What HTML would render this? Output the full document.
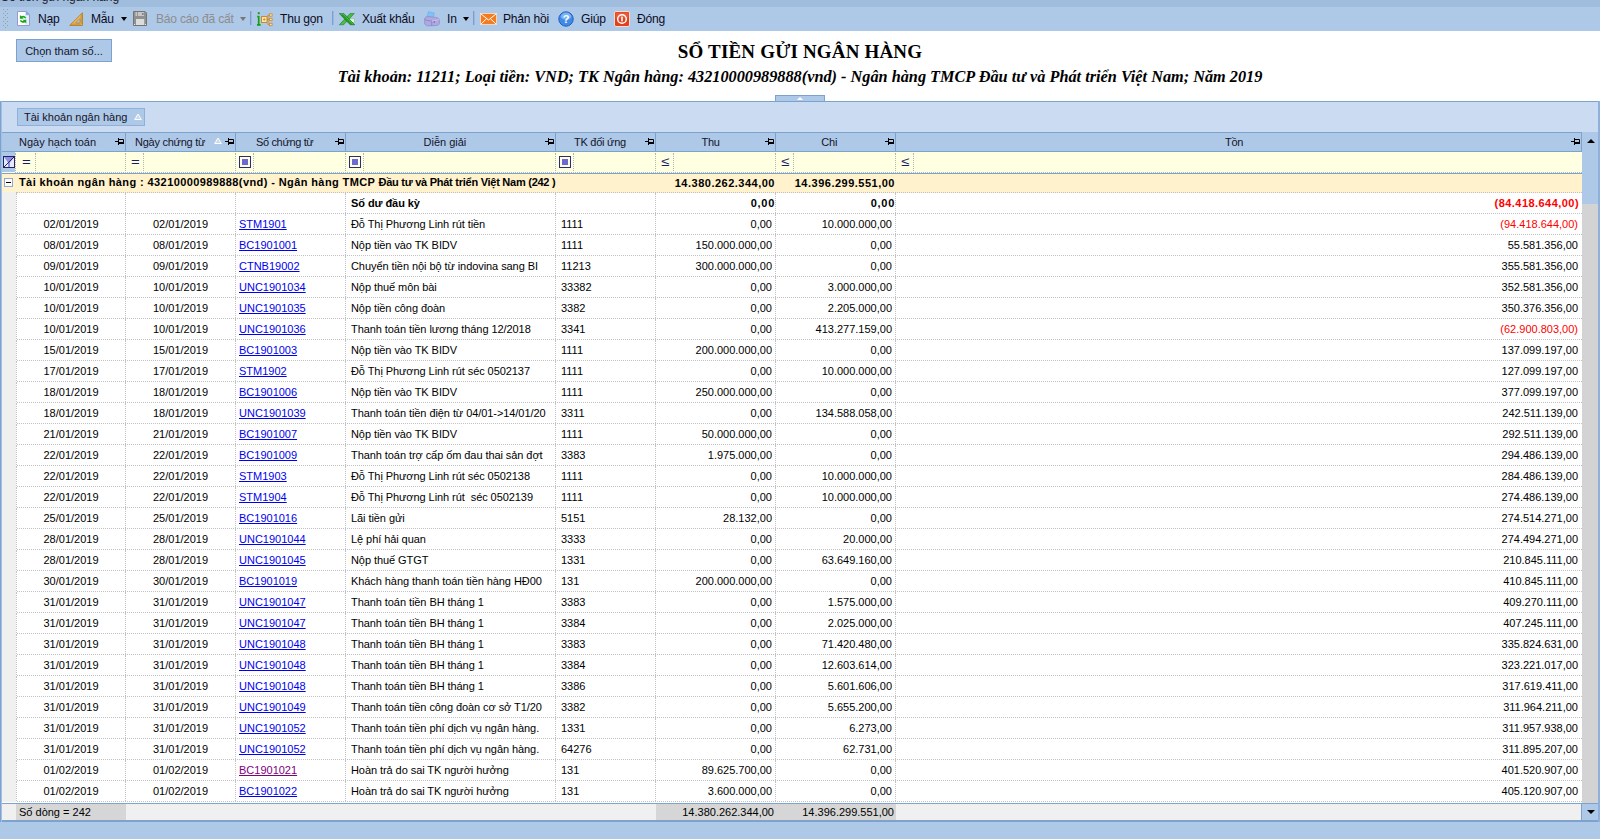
<!DOCTYPE html>
<html lang="vi"><head><meta charset="utf-8"><title>Sổ tiền gửi ngân hàng</title>
<style>
*{box-sizing:border-box;margin:0;padding:0}
html,body{width:1600px;height:839px;overflow:hidden;background:#fff}
body{position:relative;font-family:"Liberation Sans",sans-serif;font-size:11px;color:#000}
.abs{position:absolute}
#cap{left:0;top:0;width:1600px;height:7px;background:#a1bddd;overflow:hidden}
#cap span{position:absolute;left:1px;top:-10px;font-size:12px;color:#1c1c2c;white-space:nowrap}
#tb{left:0;top:7px;width:1600px;height:24px;background:#aec8e8}
#tb .t{position:absolute;top:5px;font-size:12.100px;letter-spacing:-.22px;line-height:15px;white-space:nowrap;color:#0c0c1c}
#tb .t.dis{color:#8d8d8d}
#tb .sep{position:absolute;top:4px;width:1px;height:14px;background:#7c9dcd}
#tb .sep:after{content:"";position:absolute;left:1px;top:0;width:1px;height:14px;background:#9bb8df}
#tb svg{position:absolute}
.dd{position:absolute;top:10px;width:0;height:0;border-left:3.5px solid transparent;border-right:3.5px solid transparent;border-top:4px solid #000}
.dd.g{border-top-color:#777}
#btn{left:16px;top:39px;width:96px;height:23px;background:#aec8e8;border:1px solid #7da2ce;font-size:11px;line-height:22px;text-align:center;color:#141428}
#ttl{left:0;top:40px;width:1600px;text-align:center;font-family:"Liberation Serif",serif;font-weight:bold;font-size:19px;line-height:24px;letter-spacing:.17px}
#sub{left:0;top:67px;width:1600px;text-align:center;font-family:"Liberation Serif",serif;font-weight:bold;font-style:italic;font-size:16.27px;line-height:20px}
#spl{left:775px;top:95px;width:50px;height:7px;background:#aec8e8;border:1px solid #7da2ce}
#spl:after{content:"";position:absolute;left:21px;top:1px;border-left:3px solid transparent;border-right:3px solid transparent;border-bottom:3px solid #fff}
#grid{left:0;top:101px;width:1600px;height:721px;background:#aec8e8}
#lb{left:0;top:101px;width:2px;height:721px;background:linear-gradient(90deg,#7da2ce 50%,#a3bfe2 50%)}
#gp{left:0;top:101px;width:1600px;height:32px;background:#cbdbf1;border-top:1px solid #7da2ce;border-left:1px solid #7da2ce;border-right:1px solid #7da2ce}
#chip{left:17px;top:108px;width:128px;height:18px;background:#aec8e8;border:1px solid #8fb0da;font-size:11px;line-height:16px;padding-left:6px;color:#141428}
.tri{position:absolute;width:0;height:0;border-left:4px solid transparent;border-right:4px solid transparent;border-bottom:7px solid #fff}
#hdr{left:0;top:132px;width:1582px;height:20px;background:#aec8e8;border-top:1px solid #7da2ce;border-bottom:1px solid #7da2ce}
#hdr .h{position:absolute;top:0;height:18px;border-right:1px solid #7da2ce;font-size:11px;line-height:18px;color:#141428;white-space:nowrap}
#hdr .h span{position:absolute;top:0}
.tri2{position:absolute;top:3.500px;width:8px;height:7.500px}
.pin{position:absolute;top:5px;width:9px;height:7px}
#flt{left:0;top:152px;width:1582px;height:22px;background:#ffffe1;border-bottom:1px solid #7da2ce}
#flt:after{content:"";position:absolute;left:15px;right:0;top:20px;border-top:1px dotted #a9b9c9}
#flt .v{position:absolute;top:1px;height:18px;border-left:1px dotted #b4b4b4}
#flt .e{position:absolute;top:0;font-size:13px;line-height:19px;color:#1a1a6a;transform:scaleX(1.15);transform-origin:0 50%}
#flt .sq{position:absolute;top:4px;width:12px;height:12px;border:1px solid #2c2c78;background:#ffffe1}
#flt .sq:after{content:"";position:absolute;left:2px;top:2px;width:6px;height:6px;background:#6b6bd2}
#grp{left:0;top:174px;width:1582px;height:19px;background:#fff2cc;font-weight:bold;font-size:11px;line-height:16px;white-space:pre;border-bottom:0}
#grp:after{content:"";position:absolute;left:16px;right:0;top:18px;border-top:1px dotted #c0c0c0}
#grp:before{content:"";position:absolute;left:0;width:16px;top:18px;height:1px;background:#f0f0f0}
#grp span{position:absolute;top:0}
#rows{left:0;top:193px;width:1582px;height:610px;background:#fff}
.row{position:relative;height:21px;width:1582px;border-bottom:1px dotted #c2c2c2;line-height:20px;white-space:nowrap}
.row .ind{position:absolute;left:1px;top:0;width:15px;height:21px;background:#f0f0f0}
.row .c{position:absolute;top:0;height:20px;overflow:hidden;border-left:1px dotted #c2c2c2;font-size:11px}
.c1{left:16px;width:109px;text-align:center}
.c2{left:125px;width:110px;text-align:center}
.c3{left:235px;width:110px;padding-left:3px}
.c4{left:345px;width:210px;padding-left:5px;letter-spacing:-.07px}
.c5{left:555px;width:100px;padding-left:5px}
.c6{left:655px;width:120px;text-align:right;padding-right:3px}
.c7{left:775px;width:120px;text-align:right;padding-right:3px}
.c8{left:895px;width:687px;text-align:right;padding-right:4px}
.row a{color:#0000f0;text-decoration:underline}
.row a.vis{color:#800080}
.row .red{color:#ff0000}
.row.bold{font-weight:bold}
.row.bold .c6,.row.bold .c7{letter-spacing:.7px;padding-right:0}
.row.bold .c8{letter-spacing:.45px;padding-right:3px}
#ftr{left:0;top:803px;width:1582px;height:19px;background:#f0f0f0;border-top:1px solid #7da2ce;border-bottom:2px solid #7da2ce;font-size:11px;line-height:16px;white-space:nowrap}
#ftr span{position:absolute;top:0;height:16px;background:#d6d6d6}
#sb{left:1582px;top:132px;width:16px;height:690px;background:#d3d3d3}
#sb .up{position:absolute;left:0;top:0;width:16px;height:20px;background:#aec8e8}
#sb .th{position:absolute;left:0;top:20px;width:16px;height:52px;background:#aec8e8}
#sb .dn{position:absolute;left:-1px;top:671px;width:17px;height:19px;background:#aec8e8;border-top:1px solid #7da2ce;border-left:1px solid #7da2ce;border-bottom:2px solid #7da2ce}
#rb{left:1598px;top:101px;width:2px;height:721px;background:#8fb0da}
#bot{left:0;top:822px;width:1600px;height:17px;background:#aec8e8}
</style></head><body>
<div id="cap" class="abs"><span>Sổ tiền gửi ngân hàng</span></div>
<div id="tb" class="abs">
<svg style="left:0;top:0" width="10" height="24" viewBox="0 0 10 24"><g fill="#a19b95"><rect x="3" y="2" width="1" height="1"/><rect x="7" y="2" width="1" height="1"/><rect x="5" y="4" width="1" height="1"/><rect x="3" y="6" width="1" height="1"/><rect x="7" y="6" width="1" height="1"/><rect x="5" y="8" width="1" height="1"/><rect x="3" y="10" width="1" height="1"/><rect x="7" y="10" width="1" height="1"/><rect x="5" y="12" width="1" height="1"/><rect x="3" y="14" width="1" height="1"/><rect x="7" y="14" width="1" height="1"/><rect x="5" y="16" width="1" height="1"/><rect x="3" y="18" width="1" height="1"/><rect x="7" y="18" width="1" height="1"/><rect x="5" y="20" width="1" height="1"/></g></svg>
<svg style="left:17px;top:4px" width="13" height="15" viewBox="0 0 13 15"><path d="M.5 .5h8.700l3.300 3.300v10.700H.5z" fill="#fdfeff" stroke="#9a9aca"/><path d="M8 1v13h4V4z" fill="#d9e8fb" opacity=".7"/><path d="M9.200 .5v3.300h3.300z" fill="#6fa8ee" stroke="#8a9fd6" stroke-width=".6"/><path d="M9.300 7.300A3.300 3.300 0 0 0 4.200 5.300L2.900 4v3.800h3.800L5.500 6.600A1.700 1.700 0 0 1 7.700 7.300zM2.900 9.200A3.300 3.300 0 0 0 8 11.200l1.300 1.300V8.700H5.500l1.200 1.200A1.700 1.700 0 0 1 4.500 9.200z" fill="#16a616"/></svg>
<span class="t" style="left:38px">Nạp</span>
<svg style="left:69px;top:5px" width="14" height="14" viewBox="0 0 14 14"><path d="M13.500 .700v12.800H.700z" fill="#e9b95e" stroke="#b98732" stroke-width="1"/><path d="M11 6.500v4.500H6.500z" fill="#aec8e8" stroke="#b98732" stroke-width=".9"/><path d="M3 13v-1.200M5 13v-1.600M7 13v-1.200M9 13v-1.600M11 13v-1.200M13 11h-1.200M13 9h-1.600M13 7h-1.200M13 5h-1.600M13 3h-1.200" stroke="#9a6a1e" stroke-width=".7"/></svg>
<span class="t" style="left:91px">Mẫu</span>
<i class="dd" style="left:121px"></i>
<svg style="left:133px;top:4px" width="14" height="15" viewBox="0 0 14 15"><path d="M.5 .5h11.500l1.500 1.500v12.500H.5z" fill="#909090" stroke="#747474"/><rect x="2.500" y="1" width="8.500" height="4" fill="#c6c6c6"/><rect x="4" y="1" width=".8" height="4" fill="#8c8c8c"/><rect x="9" y="2" width="1.600" height="1.800" fill="#7c7c7c"/><rect x="3" y="8" width="8.200" height="6" fill="#dcdcdc"/><rect x="1" y="13" width="1" height="1" fill="#e8e8e8"/><rect x="12" y="13" width="1" height="1" fill="#e8e8e8"/></svg>
<span class="t dis" style="left:156px">Báo cáo đã cất</span>
<i class="dd g" style="left:240px"></i>
<i class="sep" style="left:250px"></i>
<svg style="left:257px;top:5px" width="16" height="15" viewBox="0 0 16 15"><path d="M1.7 4v8.500M0 12.800h3.600M.2 4.600h1.500" stroke="#12a012" stroke-width="1.700" fill="none"/><rect x=".8" y=".2" width="1.900" height="2" fill="#12a012"/><g transform="translate(0,1)"><rect x="4.500" y="3.500" width="5.500" height="6" fill="#fbe6a2" stroke="#c98a34"/><path d="M6 6.500h2.500M7.250 5.250v2.500" stroke="#c98a34" stroke-width=".9"/><path d="M10 6.500h2.500M11 2v9.500M11 2h1.500M11 11.500h1.500" stroke="#c98a34" stroke-width=".9" fill="none"/><rect x="12.500" y=".8" width="2.600" height="2.400" fill="#fbe6a2" stroke="#c98a34" stroke-width=".8"/><rect x="12.500" y="5.300" width="2.600" height="2.400" fill="#fbe6a2" stroke="#c98a34" stroke-width=".8"/><rect x="12.500" y="10.300" width="2.600" height="2.400" fill="#fbe6a2" stroke="#c98a34" stroke-width=".8"/></g></svg>
<span class="t" style="left:280px">Thu gọn</span>
<i class="sep" style="left:332px"></i>
<svg style="left:339px;top:6px" width="16" height="12.5" viewBox="0 0 16 14" preserveAspectRatio="none"><rect x="9.500" y="6.500" width="5.800" height="4.200" fill="#e4f3dc" stroke="#7cc07c" stroke-width=".6"/><path d="M15.300 .6h-4.300L.3 13.200h4.300z" fill="#46bd46" stroke="#1d7d1d" stroke-width=".6"/><path d="M.3 .6h4.500l10.900 12.600h-4.500z" fill="#259a25" stroke="#166b16" stroke-width=".6"/><path d="M1.600 1.200h2.700l9.600 11.200" stroke="#7fdc7f" stroke-width=".7" fill="none" opacity=".8"/></svg>
<span class="t" style="left:362px">Xuất khẩu</span>
<svg style="left:424px;top:4px" width="16" height="16" viewBox="0 0 16 16"><path d="M2.600 6.500L4.600 .600l5.800 1.500L9 6.800z" fill="#7fc3f6" stroke="#5fa8e6" stroke-width=".5"/><path d="M.600 8.200C.600 6.300 2.500 5.400 5 5.600l6.500.700c2.600.300 3.900 1.500 3.900 3.300v2.200c0 1.700-1.200 2.600-3.400 2.700l-6.500.400C2.300 15 .600 13.900.600 11.800z" fill="#aea9df" stroke="#8882c6" stroke-width=".6"/><path d="M.900 8.600c1.700 1 4.200 1.300 6.800 1.200v5" stroke="#7f78c0" stroke-width=".7" fill="none"/><path d="M7.700 9.800c3 0 5.700-.500 7.300-1.500" stroke="#cfcaf0" stroke-width=".7" fill="none"/><rect x="9.600" y="10.300" width="1.400" height="1.400" fill="#6e66b0"/></svg>
<span class="t" style="left:447px">In</span>
<i class="dd" style="left:463px"></i>
<i class="sep" style="left:473px"></i>
<svg style="left:480px;top:6px" width="17" height="12" viewBox="0 0 17 12"><rect x=".4" y=".4" width="16.200" height="11.200" fill="#f47b20" stroke="#fbe3cf" stroke-width=".8"/><path d="M.8.8l7.700 6.200L16.200.8M.8 11.200l5.800-5.500M16.200 11.200l-5.800-5.500" stroke="#fff" stroke-width="1" fill="none"/></svg>
<span class="t" style="left:503px">Phản hồi</span>
<svg style="left:558px;top:4px" width="16" height="16" viewBox="0 0 16 16"><circle cx="8" cy="8" r="7.200" fill="#3f8be6" stroke="#1f5fc0" stroke-width="1"/><ellipse cx="8" cy="5.200" rx="5.200" ry="3.600" fill="#8fc0f6" opacity=".75"/><text x="8" y="12" text-anchor="middle" font-family="Liberation Sans,sans-serif" font-weight="bold" font-size="11" fill="#fff">?</text></svg>
<span class="t" style="left:581px">Giúp</span>
<svg style="left:614px;top:4px" width="16" height="16" viewBox="0 0 16 16"><rect x=".5" y=".5" width="15" height="15" rx="1.500" fill="#e0401c" stroke="#f7d9cf"/><rect x="1.500" y="1.500" width="13" height="6" fill="#ee6a44" opacity=".6"/><circle cx="8" cy="8" r="4.300" fill="none" stroke="#fff" stroke-width="1.500"/><rect x="7.200" y="5.600" width="1.600" height="4.800" fill="#fff"/></svg>
<span class="t" style="left:637px">Đóng</span>

</div>
<div id="btn" class="abs">Chọn tham số...</div>
<div id="ttl" class="abs">SỔ TIỀN GỬI NGÂN HÀNG</div>
<div id="sub" class="abs">Tài khoản: 11211; Loại tiền: VND; TK Ngân hàng: 43210000989888(vnd) - Ngân hàng TMCP Đầu tư và Phát triển Việt Nam; Năm 2019</div>
<div id="spl" class="abs"></div>
<div id="grid" class="abs"></div>
<div id="gp" class="abs"></div>
<div id="chip" class="abs">Tài khoản ngân hàng<svg class="tri2" style="left:116px;top:4px" viewBox="0 0 8 7"><path d="M4 .800L7.300 6.300H.700z" fill="#c9d9f0" stroke="#fff" stroke-width="1"/></svg></div>
<div id="hdr" class="abs">
<div class="h" style="left:1px;width:125px"><span style="left:18px">Ngày hạch toán</span><svg class="pin" style="left:114px" viewBox="0 0 9 7"><path d="M0 3.500h3.500M3.500 0v7M3.500 1.500h5v3.500" stroke="#000" stroke-width="1" fill="none"/><path d="M3.500 5h5.500" stroke="#000" stroke-width="2"/></svg></div>
<div class="h" style="left:126px;width:110px"><span style="left:9px;letter-spacing:-0.25px">Ngày chứng từ</span><svg class="tri2" style="left:88px" viewBox="0 0 8 7"><path d="M4 .800L7.300 6.300H.700z" fill="#c9d9f0" stroke="#fff" stroke-width="1"/></svg><svg class="pin" style="left:99px" viewBox="0 0 9 7"><path d="M0 3.500h3.500M3.500 0v7M3.500 1.500h5v3.500" stroke="#000" stroke-width="1" fill="none"/><path d="M3.500 5h5.500" stroke="#000" stroke-width="2"/></svg></div>
<div class="h" style="left:236px;width:110px"><span style="left:20px;letter-spacing:-0.35px">Số chứng từ</span><svg class="pin" style="left:99px" viewBox="0 0 9 7"><path d="M0 3.500h3.500M3.500 0v7M3.500 1.500h5v3.500" stroke="#000" stroke-width="1" fill="none"/><path d="M3.500 5h5.500" stroke="#000" stroke-width="2"/></svg></div>
<div class="h" style="left:346px;width:210px"><span style="left:77.5px">Diễn giải</span><svg class="pin" style="left:199px" viewBox="0 0 9 7"><path d="M0 3.500h3.500M3.500 0v7M3.500 1.500h5v3.500" stroke="#000" stroke-width="1" fill="none"/><path d="M3.500 5h5.500" stroke="#000" stroke-width="2"/></svg></div>
<div class="h" style="left:556px;width:100px"><span style="left:18px;letter-spacing:-0.25px">TK đối ứng</span><svg class="pin" style="left:89px" viewBox="0 0 9 7"><path d="M0 3.500h3.500M3.500 0v7M3.500 1.500h5v3.500" stroke="#000" stroke-width="1" fill="none"/><path d="M3.500 5h5.500" stroke="#000" stroke-width="2"/></svg></div>
<div class="h" style="left:656px;width:120px"><span style="left:45.5px;letter-spacing:-0.3px">Thu</span><svg class="pin" style="left:109px" viewBox="0 0 9 7"><path d="M0 3.500h3.500M3.500 0v7M3.500 1.500h5v3.500" stroke="#000" stroke-width="1" fill="none"/><path d="M3.500 5h5.500" stroke="#000" stroke-width="2"/></svg></div>
<div class="h" style="left:776px;width:120px"><span style="left:45.3px;letter-spacing:-0.2px">Chi</span><svg class="pin" style="left:109px" viewBox="0 0 9 7"><path d="M0 3.500h3.500M3.500 0v7M3.500 1.500h5v3.500" stroke="#000" stroke-width="1" fill="none"/><path d="M3.500 5h5.500" stroke="#000" stroke-width="2"/></svg></div>
<div class="h" style="left:896px;width:686px"><span style="left:329px;letter-spacing:-0.3px">Tồn</span><svg class="pin" style="left:675px" viewBox="0 0 9 7"><path d="M0 3.500h3.500M3.500 0v7M3.500 1.500h5v3.500" stroke="#000" stroke-width="1" fill="none"/><path d="M3.500 5h5.500" stroke="#000" stroke-width="2"/></svg></div>
</div>
<div id="flt" class="abs">
<div class="abs" style="left:1px;top:0;width:14px;height:20px;background:#aec8e8"></div>
<svg class="abs" style="left:3px;top:4px" width="12" height="12" viewBox="0 0 12 12"><rect x=".5" y=".5" width="11" height="11" fill="#e6ebfb" stroke="#23235f"/><path d="M1 1h10L7 6.500V11H5V6.500z" fill="#8f8fe8"/><path d="M.5 11.500L11.500 .500" stroke="#23235f" stroke-width="1"/></svg>
<i class="v" style="left:15px"></i>
<i class="v" style="left:35px"></i>
<span class="e" style="left:22px">=</span>
<i class="v" style="left:125px"></i>
<i class="v" style="left:143px"></i>
<span class="e" style="left:130.5px">=</span>
<i class="v" style="left:235px"></i>
<i class="v" style="left:253px"></i>
<i class="sq" style="left:239px"></i>
<i class="v" style="left:345px"></i>
<i class="v" style="left:363px"></i>
<i class="sq" style="left:349px"></i>
<i class="v" style="left:555px"></i>
<i class="v" style="left:573px"></i>
<i class="sq" style="left:559px"></i>
<i class="v" style="left:655px"></i>
<i class="v" style="left:673px"></i>
<span class="e" style="left:660.5px">≤</span>
<i class="v" style="left:775px"></i>
<i class="v" style="left:793px"></i>
<span class="e" style="left:780.5px">≤</span>
<i class="v" style="left:895px"></i>
<i class="v" style="left:913px"></i>
<span class="e" style="left:900.5px">≤</span>
</div>
<div id="grp" class="abs">
<svg class="abs" style="left:4px;top:4px" width="9" height="9" viewBox="0 0 9 9"><rect x=".5" y=".5" width="8" height="8" fill="#fff" stroke="#8fa9cf"/><path d="M2 4.500h5" stroke="#000"/></svg>
<span style="left:19px;letter-spacing:.4px">Tài khoản ngân hàng : 43210000989888(vnd) - Ngân hàng TMCP </span><span style="left:378.500px;letter-spacing:-.26px">Đầu tư và Phát triển Việt Nam (242 )</span>
<span style="left:656px;top:1px;width:119px;text-align:right;letter-spacing:.5px">14.380.262.344,00</span>
<span style="left:776px;top:1px;width:119px;text-align:right;letter-spacing:.5px">14.396.299.551,00</span>

</div>
<div id="rows" class="abs">
<div class="row bold"><i class="ind"></i><span class="c c1"></span><span class="c c2"></span><span class="c c3"></span><span class="c c4">Số dư đầu kỳ</span><span class="c c5"></span><span class="c c6">0,00</span><span class="c c7">0,00</span><span class="c c8 red">(84.418.644,00)</span></div>
<div class="row"><i class="ind"></i><span class="c c1">02/01/2019</span><span class="c c2">02/01/2019</span><span class="c c3"><a>STM1901</a></span><span class="c c4">Đỗ Thị Phương Linh rút tiền</span><span class="c c5">1111</span><span class="c c6">0,00</span><span class="c c7">10.000.000,00</span><span class="c c8 red">(94.418.644,00)</span></div>
<div class="row"><i class="ind"></i><span class="c c1">08/01/2019</span><span class="c c2">08/01/2019</span><span class="c c3"><a>BC1901001</a></span><span class="c c4">Nộp tiền vào TK BIDV</span><span class="c c5">1111</span><span class="c c6">150.000.000,00</span><span class="c c7">0,00</span><span class="c c8">55.581.356,00</span></div>
<div class="row"><i class="ind"></i><span class="c c1">09/01/2019</span><span class="c c2">09/01/2019</span><span class="c c3"><a>CTNB19002</a></span><span class="c c4">Chuyển tiền nội bộ từ indovina sang BI</span><span class="c c5">11213</span><span class="c c6">300.000.000,00</span><span class="c c7">0,00</span><span class="c c8">355.581.356,00</span></div>
<div class="row"><i class="ind"></i><span class="c c1">10/01/2019</span><span class="c c2">10/01/2019</span><span class="c c3"><a>UNC1901034</a></span><span class="c c4">Nộp thuế môn bài</span><span class="c c5">33382</span><span class="c c6">0,00</span><span class="c c7">3.000.000,00</span><span class="c c8">352.581.356,00</span></div>
<div class="row"><i class="ind"></i><span class="c c1">10/01/2019</span><span class="c c2">10/01/2019</span><span class="c c3"><a>UNC1901035</a></span><span class="c c4">Nộp tiền công đoàn</span><span class="c c5">3382</span><span class="c c6">0,00</span><span class="c c7">2.205.000,00</span><span class="c c8">350.376.356,00</span></div>
<div class="row"><i class="ind"></i><span class="c c1">10/01/2019</span><span class="c c2">10/01/2019</span><span class="c c3"><a>UNC1901036</a></span><span class="c c4">Thanh toán tiền lương tháng 12/2018</span><span class="c c5">3341</span><span class="c c6">0,00</span><span class="c c7">413.277.159,00</span><span class="c c8 red">(62.900.803,00)</span></div>
<div class="row"><i class="ind"></i><span class="c c1">15/01/2019</span><span class="c c2">15/01/2019</span><span class="c c3"><a>BC1901003</a></span><span class="c c4">Nộp tiền vào TK BIDV</span><span class="c c5">1111</span><span class="c c6">200.000.000,00</span><span class="c c7">0,00</span><span class="c c8">137.099.197,00</span></div>
<div class="row"><i class="ind"></i><span class="c c1">17/01/2019</span><span class="c c2">17/01/2019</span><span class="c c3"><a>STM1902</a></span><span class="c c4">Đỗ Thị Phương Linh rút séc 0502137</span><span class="c c5">1111</span><span class="c c6">0,00</span><span class="c c7">10.000.000,00</span><span class="c c8">127.099.197,00</span></div>
<div class="row"><i class="ind"></i><span class="c c1">18/01/2019</span><span class="c c2">18/01/2019</span><span class="c c3"><a>BC1901006</a></span><span class="c c4">Nộp tiền vào TK BIDV</span><span class="c c5">1111</span><span class="c c6">250.000.000,00</span><span class="c c7">0,00</span><span class="c c8">377.099.197,00</span></div>
<div class="row"><i class="ind"></i><span class="c c1">18/01/2019</span><span class="c c2">18/01/2019</span><span class="c c3"><a>UNC1901039</a></span><span class="c c4">Thanh toán tiền điện từ 04/01-&gt;14/01/20</span><span class="c c5">3311</span><span class="c c6">0,00</span><span class="c c7">134.588.058,00</span><span class="c c8">242.511.139,00</span></div>
<div class="row"><i class="ind"></i><span class="c c1">21/01/2019</span><span class="c c2">21/01/2019</span><span class="c c3"><a>BC1901007</a></span><span class="c c4">Nộp tiền vào TK BIDV</span><span class="c c5">1111</span><span class="c c6">50.000.000,00</span><span class="c c7">0,00</span><span class="c c8">292.511.139,00</span></div>
<div class="row"><i class="ind"></i><span class="c c1">22/01/2019</span><span class="c c2">22/01/2019</span><span class="c c3"><a>BC1901009</a></span><span class="c c4">Thanh toán trợ cấp ốm đau thai sản đợt</span><span class="c c5">3383</span><span class="c c6">1.975.000,00</span><span class="c c7">0,00</span><span class="c c8">294.486.139,00</span></div>
<div class="row"><i class="ind"></i><span class="c c1">22/01/2019</span><span class="c c2">22/01/2019</span><span class="c c3"><a>STM1903</a></span><span class="c c4">Đỗ Thị Phương Linh rút séc 0502138</span><span class="c c5">1111</span><span class="c c6">0,00</span><span class="c c7">10.000.000,00</span><span class="c c8">284.486.139,00</span></div>
<div class="row"><i class="ind"></i><span class="c c1">22/01/2019</span><span class="c c2">22/01/2019</span><span class="c c3"><a>STM1904</a></span><span class="c c4">Đỗ Thị Phương Linh rút&nbsp; séc 0502139</span><span class="c c5">1111</span><span class="c c6">0,00</span><span class="c c7">10.000.000,00</span><span class="c c8">274.486.139,00</span></div>
<div class="row"><i class="ind"></i><span class="c c1">25/01/2019</span><span class="c c2">25/01/2019</span><span class="c c3"><a>BC1901016</a></span><span class="c c4">Lãi tiền gửi</span><span class="c c5">5151</span><span class="c c6">28.132,00</span><span class="c c7">0,00</span><span class="c c8">274.514.271,00</span></div>
<div class="row"><i class="ind"></i><span class="c c1">28/01/2019</span><span class="c c2">28/01/2019</span><span class="c c3"><a>UNC1901044</a></span><span class="c c4">Lệ phí hải quan</span><span class="c c5">3333</span><span class="c c6">0,00</span><span class="c c7">20.000,00</span><span class="c c8">274.494.271,00</span></div>
<div class="row"><i class="ind"></i><span class="c c1">28/01/2019</span><span class="c c2">28/01/2019</span><span class="c c3"><a>UNC1901045</a></span><span class="c c4">Nộp thuế GTGT</span><span class="c c5">1331</span><span class="c c6">0,00</span><span class="c c7">63.649.160,00</span><span class="c c8">210.845.111,00</span></div>
<div class="row"><i class="ind"></i><span class="c c1">30/01/2019</span><span class="c c2">30/01/2019</span><span class="c c3"><a>BC1901019</a></span><span class="c c4">Khách hàng thanh toán tiền hàng HĐ00</span><span class="c c5">131</span><span class="c c6">200.000.000,00</span><span class="c c7">0,00</span><span class="c c8">410.845.111,00</span></div>
<div class="row"><i class="ind"></i><span class="c c1">31/01/2019</span><span class="c c2">31/01/2019</span><span class="c c3"><a>UNC1901047</a></span><span class="c c4">Thanh toán tiền BH tháng 1</span><span class="c c5">3383</span><span class="c c6">0,00</span><span class="c c7">1.575.000,00</span><span class="c c8">409.270.111,00</span></div>
<div class="row"><i class="ind"></i><span class="c c1">31/01/2019</span><span class="c c2">31/01/2019</span><span class="c c3"><a>UNC1901047</a></span><span class="c c4">Thanh toán tiền BH tháng 1</span><span class="c c5">3384</span><span class="c c6">0,00</span><span class="c c7">2.025.000,00</span><span class="c c8">407.245.111,00</span></div>
<div class="row"><i class="ind"></i><span class="c c1">31/01/2019</span><span class="c c2">31/01/2019</span><span class="c c3"><a>UNC1901048</a></span><span class="c c4">Thanh toán tiền BH tháng 1</span><span class="c c5">3383</span><span class="c c6">0,00</span><span class="c c7">71.420.480,00</span><span class="c c8">335.824.631,00</span></div>
<div class="row"><i class="ind"></i><span class="c c1">31/01/2019</span><span class="c c2">31/01/2019</span><span class="c c3"><a>UNC1901048</a></span><span class="c c4">Thanh toán tiền BH tháng 1</span><span class="c c5">3384</span><span class="c c6">0,00</span><span class="c c7">12.603.614,00</span><span class="c c8">323.221.017,00</span></div>
<div class="row"><i class="ind"></i><span class="c c1">31/01/2019</span><span class="c c2">31/01/2019</span><span class="c c3"><a>UNC1901048</a></span><span class="c c4">Thanh toán tiền BH tháng 1</span><span class="c c5">3386</span><span class="c c6">0,00</span><span class="c c7">5.601.606,00</span><span class="c c8">317.619.411,00</span></div>
<div class="row"><i class="ind"></i><span class="c c1">31/01/2019</span><span class="c c2">31/01/2019</span><span class="c c3"><a>UNC1901049</a></span><span class="c c4">Thanh toán tiền công đoàn cơ sở T1/20</span><span class="c c5">3382</span><span class="c c6">0,00</span><span class="c c7">5.655.200,00</span><span class="c c8">311.964.211,00</span></div>
<div class="row"><i class="ind"></i><span class="c c1">31/01/2019</span><span class="c c2">31/01/2019</span><span class="c c3"><a>UNC1901052</a></span><span class="c c4">Thanh toán tiền phí dịch vụ ngân hàng.</span><span class="c c5">1331</span><span class="c c6">0,00</span><span class="c c7">6.273,00</span><span class="c c8">311.957.938,00</span></div>
<div class="row"><i class="ind"></i><span class="c c1">31/01/2019</span><span class="c c2">31/01/2019</span><span class="c c3"><a>UNC1901052</a></span><span class="c c4">Thanh toán tiền phí dịch vụ ngân hàng.</span><span class="c c5">64276</span><span class="c c6">0,00</span><span class="c c7">62.731,00</span><span class="c c8">311.895.207,00</span></div>
<div class="row"><i class="ind"></i><span class="c c1">01/02/2019</span><span class="c c2">01/02/2019</span><span class="c c3"><a class="vis">BC1901021</a></span><span class="c c4">Hoàn trả do sai TK người hưởng</span><span class="c c5">131</span><span class="c c6">89.625.700,00</span><span class="c c7">0,00</span><span class="c c8">401.520.907,00</span></div>
<div class="row"><i class="ind"></i><span class="c c1">01/02/2019</span><span class="c c2">01/02/2019</span><span class="c c3"><a>BC1901022</a></span><span class="c c4">Hoàn trả do sai TK người hưởng</span><span class="c c5">131</span><span class="c c6">3.600.000,00</span><span class="c c7">0,00</span><span class="c c8">405.120.907,00</span></div>
</div>
<div id="ftr" class="abs"><i class="abs" style="left:0;top:0;width:2px;height:16px;background:#aec8e8"></i><span style="left:16px;width:110px;padding-left:3px">Số dòng = 242</span><span style="left:656px;width:120px;text-align:right;padding-right:2px">14.380.262.344,00</span><span style="left:776px;width:120px;text-align:right;padding-right:2px">14.396.299.551,00</span></div>
<div id="sb" class="abs"><div class="up"><i class="dd" style="left:4.500px;top:7px;border-left-width:4px;border-right-width:4px;border-top:0;border-bottom:4px solid #000"></i></div><div class="th"></div><div class="dn"><i class="dd" style="left:4.500px;top:6px;border-left-width:4px;border-right-width:4px;border-top-width:4.500px"></i></div></div>
<div id="rb" class="abs"></div><div id="lb" class="abs"></div>
<div id="bot" class="abs"></div>
</body></html>
